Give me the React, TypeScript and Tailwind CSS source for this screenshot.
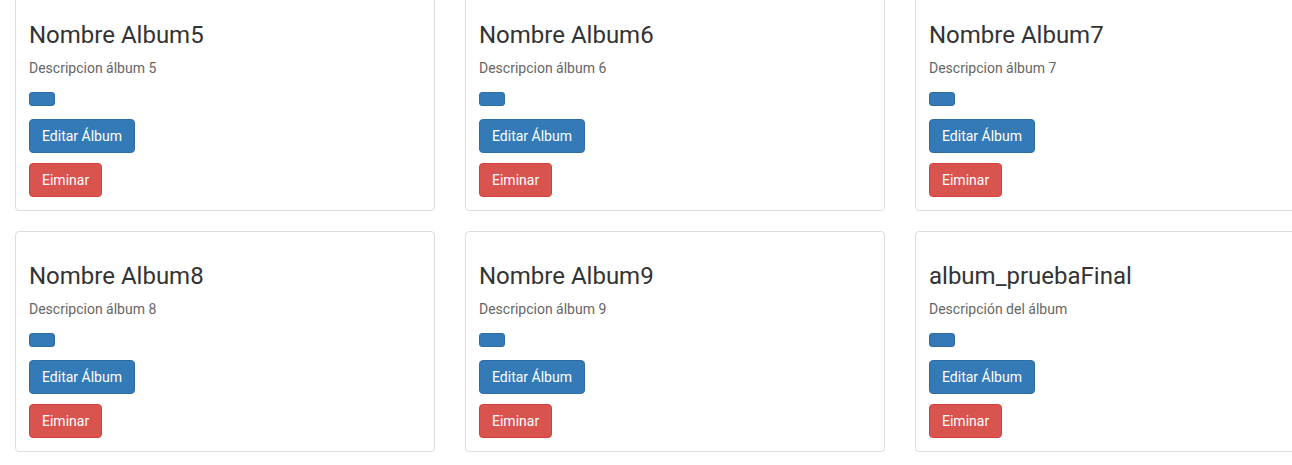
const albums = [
  { name: "Nombre Album5", desc: "Descripcion álbum 5" },
  { name: "Nombre Album6", desc: "Descripcion álbum 6" },
  { name: "Nombre Album7", desc: "Descripcion álbum 7" },
  { name: "Nombre Album8", desc: "Descripcion álbum 8" },
  { name: "Nombre Album9", desc: "Descripcion álbum 9" },
  { name: "album_pruebaFinal", desc: "Descripción del álbum" },
];

function AlbumCard({ name, desc }: { name: string; desc: string }) {
  return (
    <div className="flex flex-col items-start border border-[#dddddd] rounded-[4px] bg-white px-[13px] pt-[13px] pb-[13px]">
      <h3 className="mt-[18px] text-[24px] leading-[26px] text-[#333333] font-normal">{name}</h3>
      <p className="mt-[10px] text-[14px] leading-[20px] text-[#666666]">{desc}</p>
      <span className="mt-[14px] w-[26px] h-[14px] rounded-[3px] bg-[#337ab7] border border-[#2e6da4]" />
      <button className="mt-[13px] h-[34px] px-[12px] text-[14px] leading-[20px] text-white bg-[#337ab7] border border-[#2e6da4] rounded-[4px]">
        Editar Álbum
      </button>
      <button className="mt-[10px] h-[34px] px-[12px] text-[14px] leading-[20px] text-white bg-[#d9534f] border border-[#d43f3a] rounded-[4px]">
        Eiminar
      </button>
    </div>
  );
}

export default function App() {
  return (
    <div className="w-[1292px] h-[465px] overflow-hidden bg-white font-['Roboto',_'Liberation_Sans',_sans-serif]">
      <div className="-mt-[10px] w-[1350px] pl-[15px] grid grid-cols-[420px_420px_420px] gap-x-[30px] gap-y-[20px]">
        {albums.map((a) => (
          <AlbumCard key={a.name} name={a.name} desc={a.desc} />
        ))}
      </div>
    </div>
  );
}
